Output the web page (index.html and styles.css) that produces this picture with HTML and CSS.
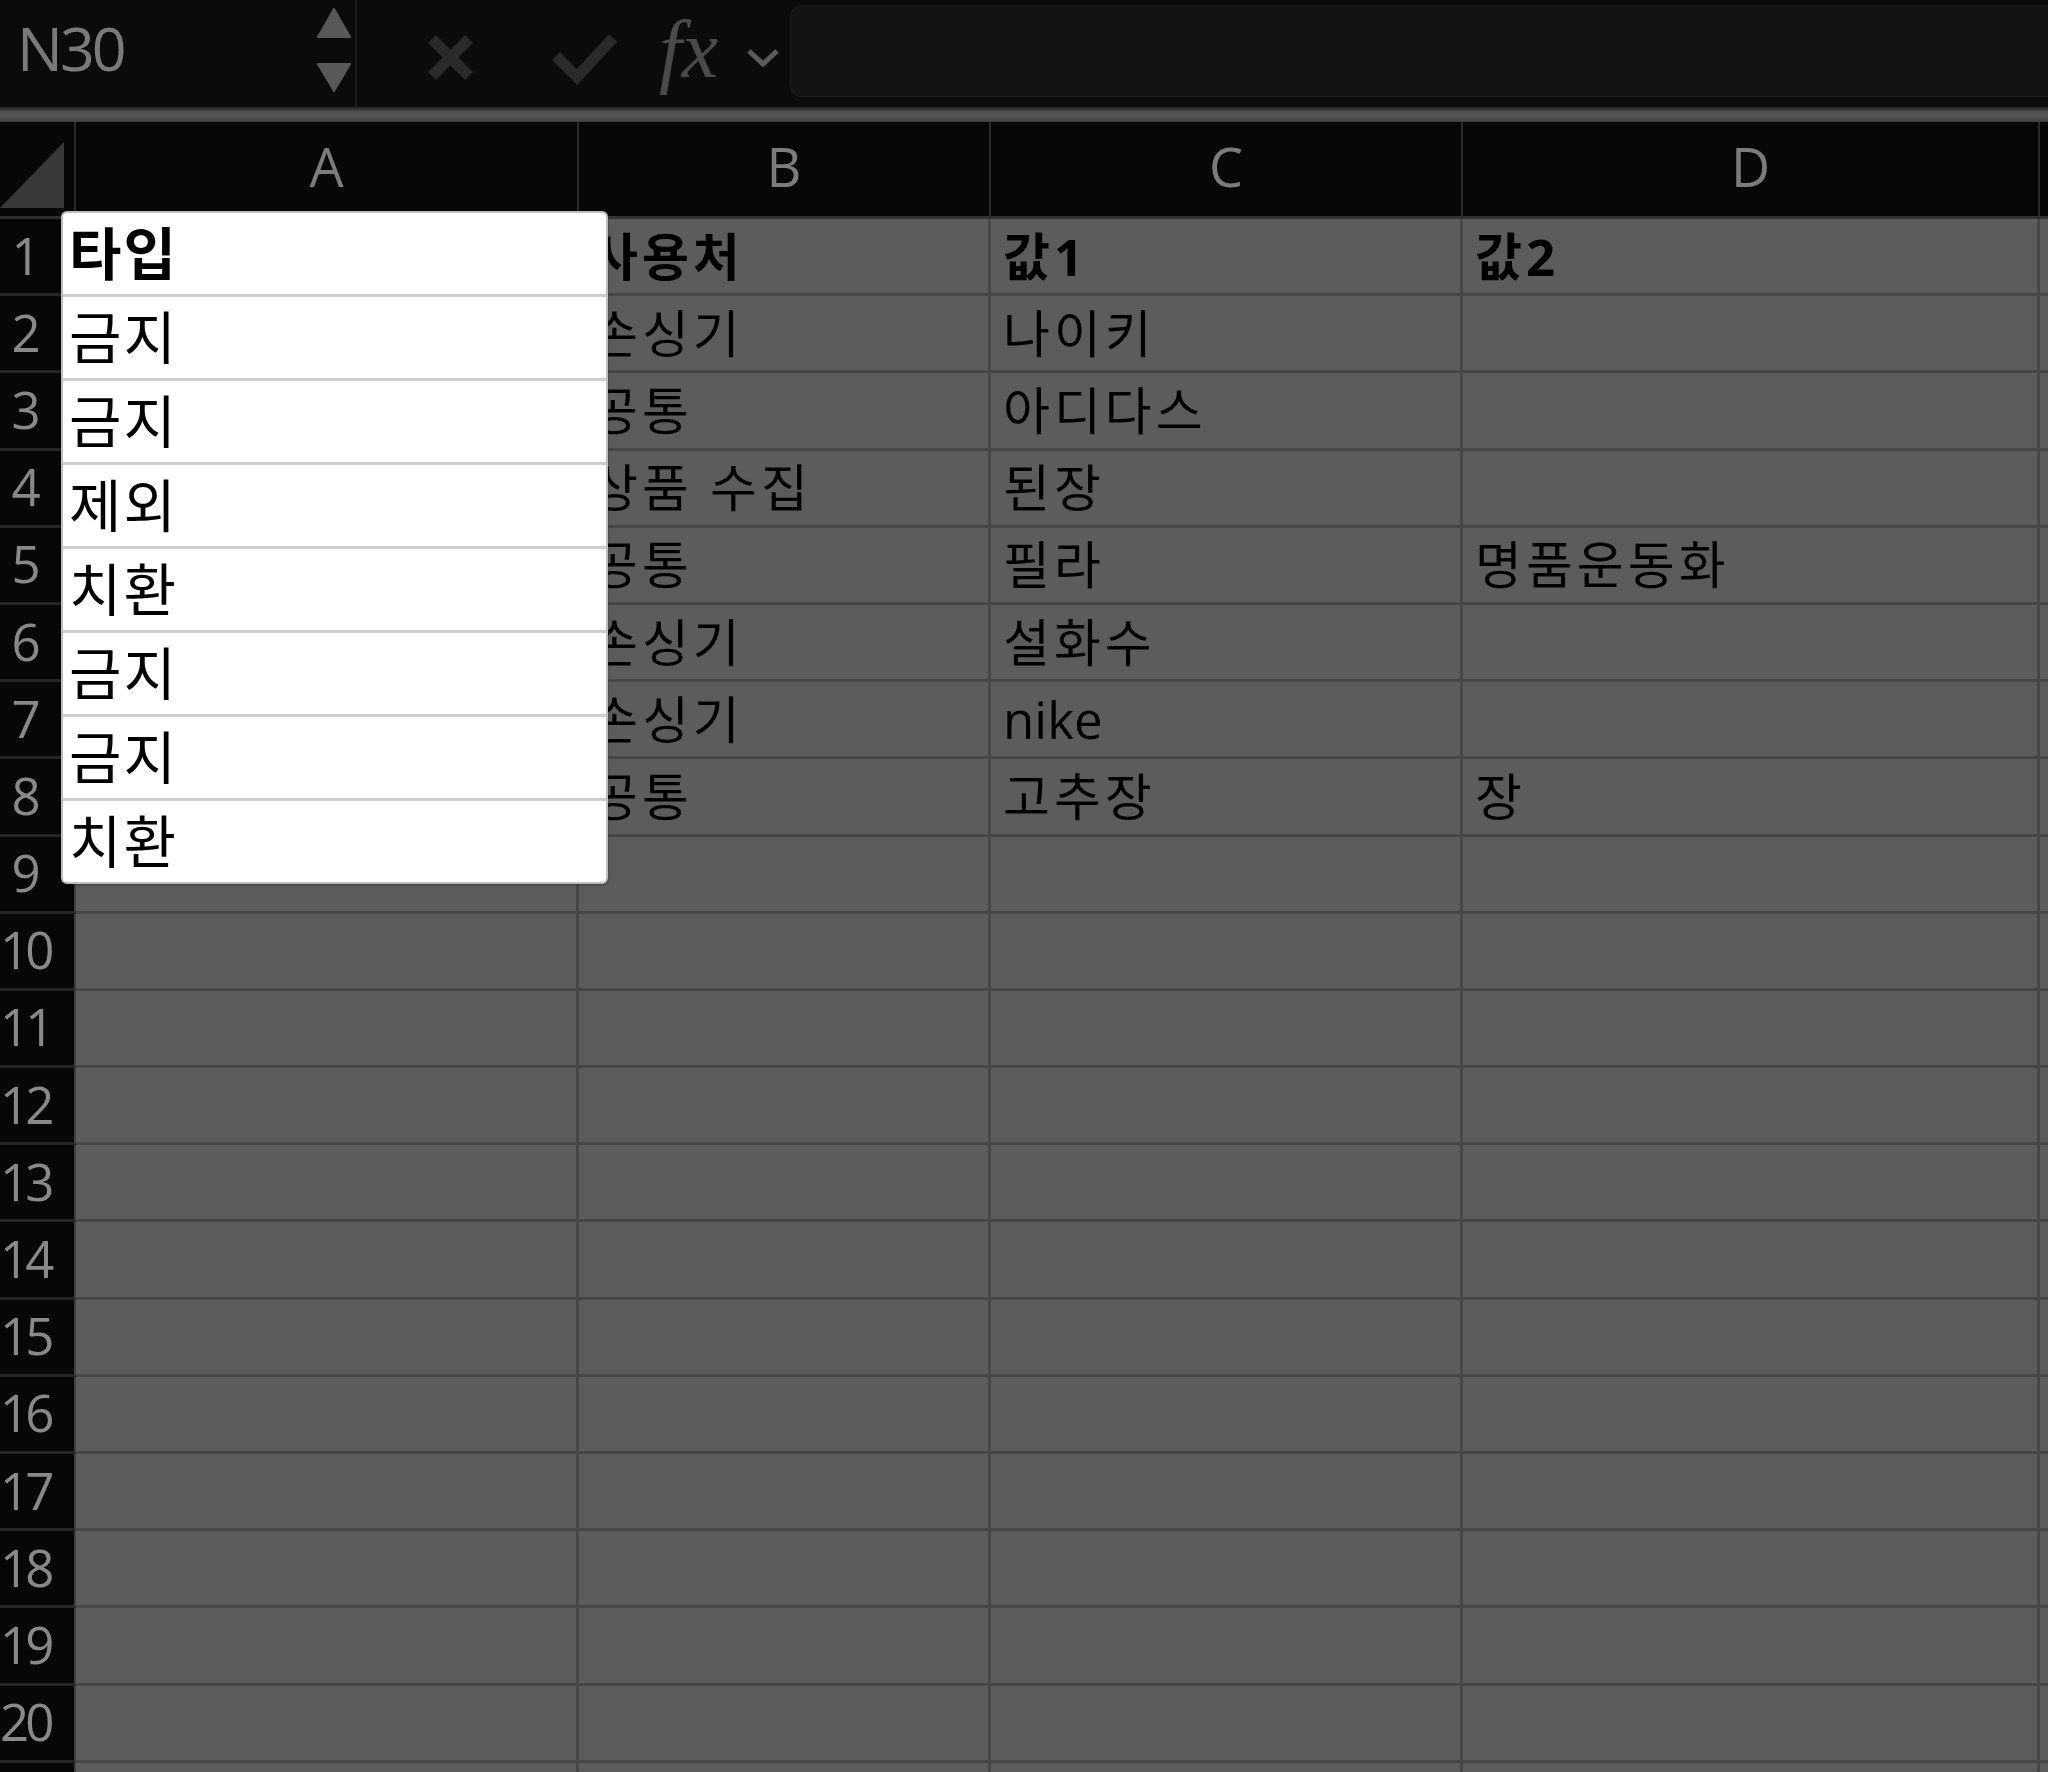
FILE: index.html
```html
<!DOCTYPE html>
<html lang="ko">
<head>
<meta charset="utf-8">
<title>Sheet</title>
<link rel="stylesheet" href="styles.css">
</head>
<body>
<div class="app">
  <header class="toolbar">
    <div class="namebox">
      <span class="cellref">N30</span>
      <svg class="stepper" width="36" height="107" viewBox="0 0 36 107" aria-hidden="true">
        <path d="M2 37 L18 9 L34 37 Z" fill="#585858" stroke="#585858" stroke-width="2" stroke-linejoin="round"/>
        <path d="M2 64 L34 64 L18 91 Z" fill="#585858" stroke="#585858" stroke-width="2" stroke-linejoin="round"/>
      </svg>
    </div>
    <svg class="actions" width="433" height="107" viewBox="0 0 433 107">
      <path d="M75 39 L112 76 M112 39 L75 76" stroke="#2a2a2a" stroke-width="11" fill="none"/>
      <path d="M199 56 L220 77 L256 38" stroke="#2a2a2a" stroke-width="11" fill="none"/>
      <text x="302" y="77" class="fx">fx</text>
      <path d="M392 51 L406 64 L420 51" stroke="#5a5a5a" stroke-width="5" fill="none"/>
    </svg>
    <div class="formula"></div>
  </header>
  <div class="band"></div>
  <main class="sheet">
    <div class="grid">
      <div class="corner"><svg width="76" height="94" viewBox="0 0 76 94"><path d="M64 20 L64 86 L0 86 Z" fill="#383838"/></svg></div>
      <div class="colhead">A</div>
      <div class="colhead">B</div>
      <div class="colhead">C</div>
      <div class="colhead">D</div>
      <div class="colhead"></div>

      <div class="rowhead"><span class="num">1</span></div>
      <div class="cell"></div><div class="cell bold">사용처</div><div class="cell bold">값1</div><div class="cell bold">값2</div><div class="cell"></div>

      <div class="rowhead"><span class="num">2</span></div>
      <div class="cell"></div><div class="cell">손싱기</div><div class="cell">나이키</div><div class="cell"></div><div class="cell"></div>

      <div class="rowhead"><span class="num">3</span></div>
      <div class="cell"></div><div class="cell">공통</div><div class="cell">아디다스</div><div class="cell"></div><div class="cell"></div>

      <div class="rowhead"><span class="num">4</span></div>
      <div class="cell"></div><div class="cell">상품 수집</div><div class="cell">된장</div><div class="cell"></div><div class="cell"></div>

      <div class="rowhead"><span class="num">5</span></div>
      <div class="cell"></div><div class="cell">공통</div><div class="cell">필라</div><div class="cell">명품운동화</div><div class="cell"></div>

      <div class="rowhead"><span class="num">6</span></div>
      <div class="cell"></div><div class="cell">손싱기</div><div class="cell">설화수</div><div class="cell"></div><div class="cell"></div>

      <div class="rowhead"><span class="num">7</span></div>
      <div class="cell"></div><div class="cell">손싱기</div><div class="cell latin">nike</div><div class="cell"></div><div class="cell"></div>

      <div class="rowhead"><span class="num">8</span></div>
      <div class="cell"></div><div class="cell">공통</div><div class="cell">고추장</div><div class="cell">장</div><div class="cell"></div>

      <div class="rowhead"><span class="num">9</span></div>
      <div class="cell"></div><div class="cell"></div><div class="cell"></div><div class="cell"></div><div class="cell"></div>

      <div class="rowhead"><span class="num">10</span></div>
      <div class="cell"></div><div class="cell"></div><div class="cell"></div><div class="cell"></div><div class="cell"></div>

      <div class="rowhead"><span class="num">11</span></div>
      <div class="cell"></div><div class="cell"></div><div class="cell"></div><div class="cell"></div><div class="cell"></div>

      <div class="rowhead"><span class="num">12</span></div>
      <div class="cell"></div><div class="cell"></div><div class="cell"></div><div class="cell"></div><div class="cell"></div>

      <div class="rowhead"><span class="num">13</span></div>
      <div class="cell"></div><div class="cell"></div><div class="cell"></div><div class="cell"></div><div class="cell"></div>

      <div class="rowhead"><span class="num">14</span></div>
      <div class="cell"></div><div class="cell"></div><div class="cell"></div><div class="cell"></div><div class="cell"></div>

      <div class="rowhead"><span class="num">15</span></div>
      <div class="cell"></div><div class="cell"></div><div class="cell"></div><div class="cell"></div><div class="cell"></div>

      <div class="rowhead"><span class="num">16</span></div>
      <div class="cell"></div><div class="cell"></div><div class="cell"></div><div class="cell"></div><div class="cell"></div>

      <div class="rowhead"><span class="num">17</span></div>
      <div class="cell"></div><div class="cell"></div><div class="cell"></div><div class="cell"></div><div class="cell"></div>

      <div class="rowhead"><span class="num">18</span></div>
      <div class="cell"></div><div class="cell"></div><div class="cell"></div><div class="cell"></div><div class="cell"></div>

      <div class="rowhead"><span class="num">19</span></div>
      <div class="cell"></div><div class="cell"></div><div class="cell"></div><div class="cell"></div><div class="cell"></div>

      <div class="rowhead"><span class="num">20</span></div>
      <div class="cell"></div><div class="cell"></div><div class="cell"></div><div class="cell"></div><div class="cell"></div>

      <div class="rowhead"><span class="num"></span></div>
      <div class="cell"></div><div class="cell"></div><div class="cell"></div><div class="cell"></div><div class="cell"></div>
    </div>

    <ul class="autocomplete">
      <li class="bold">타입</li>
      <li>금지</li>
      <li>금지</li>
      <li>제외</li>
      <li>치환</li>
      <li>금지</li>
      <li>금지</li>
      <li>치환</li>
    </ul>
  </main>
</div>
</body>
</html>
```

FILE: styles.css
```css
* { box-sizing: border-box; }

html, body {
  margin: 0;
  padding: 0;
  background: #070707;
  width: 2048px;
  height: 1772px;
  overflow: hidden;
  font-family: "Open Sans", "Noto Sans CJK KR", sans-serif;
}

.app {
  display: flex;
  flex-direction: column;
  width: 2048px;
  height: 1772px;
}

/* ---------- toolbar ---------- */
.toolbar {
  display: flex;
  align-items: stretch;
  height: 107px;
  background: #0b0b0b;
  flex: none;
}

.namebox {
  width: 357px;
  display: flex;
  align-items: center;
  border-right: 2px solid #1b1b1b;
  padding-left: 17px;
  padding-right: 3px;
}

.cellref {
  font-size: 61px;
  color: #7a7a7a;
  letter-spacing: -3px;
  line-height: 1;
  margin-top: -12px;
}

.stepper {
  margin-left: auto;
  display: block;
}

.actions {
  display: block;
  flex: none;
}

.fx {
  font-family: "Liberation Serif", "DejaVu Serif", serif;
  font-style: italic;
  font-size: 82px;
  fill: #4a4a4a;
}

.formula {
  flex: 1;
  margin-top: 5px;
  height: 92px;
  background: #131313;
  border: 1px solid #1c1c1c;
  border-right: none;
  border-radius: 12px 0 0 12px;
}

.band {
  flex: none;
  height: 15px;
  background: linear-gradient(#222 0%, #4e4e4e 30%, #575757 60%, #3e3e3e 100%);
}

/* ---------- sheet ---------- */
.sheet {
  position: relative;
  flex: 1;
  overflow: hidden;
}

.grid {
  display: grid;
  grid-template-columns: 76px 503px 412px 472px 577px 40px;
  grid-template-rows: 97px;
  grid-auto-rows: 77.2px;
}

.corner {
  background: #070707;
  border-right: 2px solid #2a2a2a;
  border-bottom: 3px solid #2e2e2e;
  overflow: hidden;
}
.corner svg { display: block; }

.colhead {
  background: #070707;
  color: #7c7c7c;
  font-size: 54px;
  display: flex;
  align-items: center;
  justify-content: center;
  border-right: 2px solid #2c2c2c;
  border-bottom: 3px solid #333;
  padding-bottom: 6px;
}

.rowhead {
  background: #070707;
  border-bottom: 3px solid #252525;
  border-right: 2px solid #3e3e3e;
  display: flex;
  align-items: center;
  overflow: visible;
}

.num {
  width: 48px;
  text-align: center;
  font-size: 51px;
  color: #898989;
  letter-spacing: -4px;
  white-space: nowrap;
  line-height: 1;
  margin-top: -2px;
}

.cell {
  background: #5c5c5c;
  border-right: 3px solid #474747;
  border-bottom: 3px solid #474747;
  display: flex;
  align-items: center;
  padding-left: 12px;
  font-size: 51px;
  letter-spacing: 4px;
  color: #000;
  white-space: nowrap;
  overflow: hidden;
  line-height: 1;
}

.cell.latin { letter-spacing: 0; }

.bold { font-weight: 700; }

/* ---------- autocomplete overlay ---------- */
.autocomplete {
  position: absolute;
  left: 61px;
  top: 89px;
  width: 547px;
  margin: 0;
  padding: 0;
  list-style: none;
  background: #fff;
  border: 2px solid #bdbdbd;
  border-radius: 6px;
  overflow: hidden;
  box-shadow: 0 1px 3px rgba(0,0,0,0.35);
}

.autocomplete li {
  height: 81px;
  display: flex;
  align-items: center;
  padding-left: 6px;
  font-size: 57px;
  letter-spacing: 2px;
  color: #000;
  line-height: 1;
}

.autocomplete li + li {
  height: 84px;
  border-top: 3px solid #cdcdcd;
}
```
